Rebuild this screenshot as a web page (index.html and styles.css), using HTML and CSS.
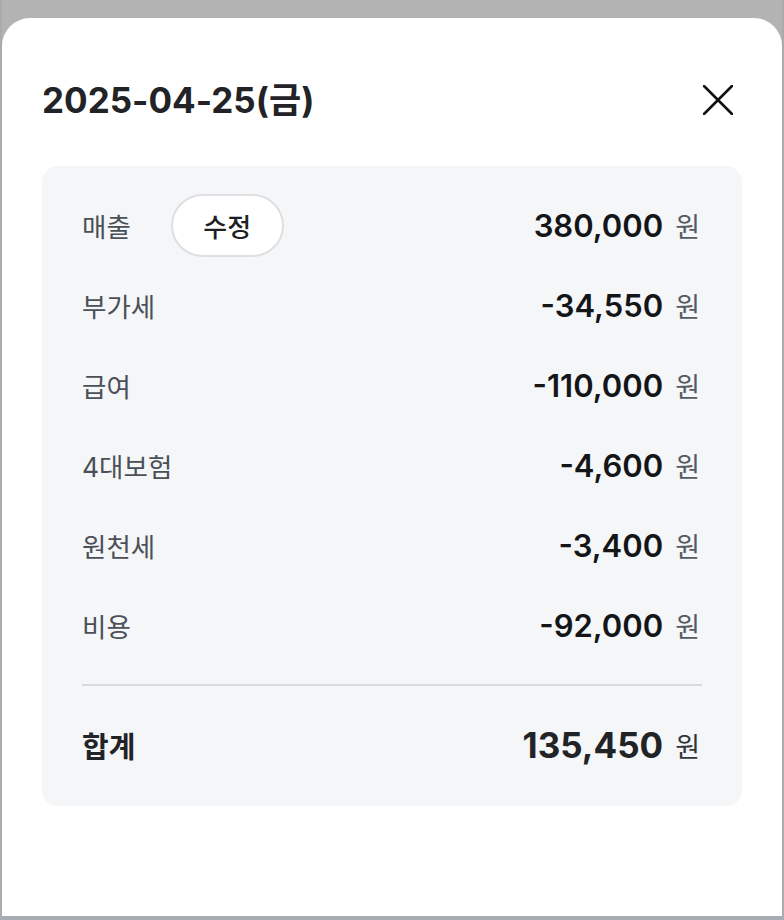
FILE: index.html
```html
<!DOCTYPE html>
<html lang="ko">
<head>
<meta charset="utf-8">
<title>2025-04-25</title>
<link rel="stylesheet" href="styles.css">
</head>
<body>
<div class="frame">
  <div class="sheet">
    <div class="header">
      <h1 class="title">2025-04-25(금)</h1>
      <button class="close" aria-label="닫기">
        <svg width="30" height="30" viewBox="0 0 30 30"><path d="M1 1 L29 29 M29 1 L1 29" stroke="#111" stroke-width="2.6" stroke-linecap="round" fill="none"/></svg>
      </button>
    </div>
    <div class="card">
      <div class="rows">
        <div class="row">
          <div class="left"><span class="label">매출</span><button class="edit">수정</button></div>
          <div class="amount"><span class="num">380,000</span><span class="unit">원</span></div>
        </div>
        <div class="row">
          <div class="left"><span class="label">부가세</span></div>
          <div class="amount"><span class="num">-34,550</span><span class="unit">원</span></div>
        </div>
        <div class="row">
          <div class="left"><span class="label">급여</span></div>
          <div class="amount"><span class="num">-110,000</span><span class="unit">원</span></div>
        </div>
        <div class="row">
          <div class="left"><span class="label">4대보험</span></div>
          <div class="amount"><span class="num">-4,600</span><span class="unit">원</span></div>
        </div>
        <div class="row">
          <div class="left"><span class="label">원천세</span></div>
          <div class="amount"><span class="num">-3,400</span><span class="unit">원</span></div>
        </div>
        <div class="row">
          <div class="left"><span class="label">비용</span></div>
          <div class="amount"><span class="num">-92,000</span><span class="unit">원</span></div>
        </div>
      </div>
      <div class="divider"></div>
      <div class="row total">
        <div class="left"><span class="label">합계</span></div>
        <div class="amount"><span class="num">135,450</span><span class="unit">원</span></div>
      </div>
    </div>
  </div>
</div>
</body>
</html>
```

FILE: styles.css
```css
* { box-sizing: border-box; }
html, body { margin: 0; padding: 0; }
body {
  background: #a7abb2;
  font-family: "Inter", "Noto Sans CJK KR", "Noto Sans", sans-serif;
  height: 920px;
  overflow: hidden;
}
.frame {
  margin: 0 2px 0 2px;
  height: 916px;
  background: #b3b3b3;
  padding-top: 18px;
}
.sheet {
  background: #ffffff;
  height: 898px;
  border-radius: 28px 28px 0 0;
  padding: 51px 40px 0 40px;
}
.header {
  height: 56px;
  display: flex;
  align-items: center;
  justify-content: space-between;
}
.title {
  margin: 0;
  font-size: 35px;
  font-weight: 700;
  color: #222326;
}
.close {
  width: 48px;
  height: 48px;
  padding: 0;
  border: 0;
  background: transparent;
  display: flex;
  align-items: center;
  justify-content: center;
  margin-top: 6px;
}
.card {
  margin-top: 41px;
  background: #f5f6f8;
  border-radius: 16px;
  padding: 27px 42px 29px 40px;
}
.rows {
  display: flex;
  flex-direction: column;
  gap: 16px;
}
.row {
  height: 64px;
  display: flex;
  align-items: center;
  justify-content: space-between;
}
.left {
  display: flex;
  align-items: center;
  gap: 40px;
}
.label {
  font-size: 26.5px;
  color: #4b4f57;
}
.edit {
  width: 113px;
  height: 63px;
  border: 2px solid #dedfe2;
  border-radius: 32px;
  background: #ffffff;
  font-family: inherit;
  font-size: 26px;
  font-weight: 500;
  color: #1e1f22;
  padding: 0;
}
.amount {
  display: flex;
  align-items: center;
  gap: 12px;
}
.num {
  font-size: 31px;
  font-weight: 600;
  color: #141517;
}
.unit {
  font-size: 27px;
  color: #555a62;
}
.divider {
  margin-top: 27px;
  margin-right: -2px;
  height: 2px;
  background: #d9dadf;
}
.total {
  margin-top: 27px;
}
.total .label {
  font-size: 29px;
  font-weight: 700;
  color: #222326;
}
.total .num {
  font-size: 35px;
  font-weight: 700;
  color: #222326;
}
.total .unit {
  font-size: 27px;
  color: #333539;
}
```
